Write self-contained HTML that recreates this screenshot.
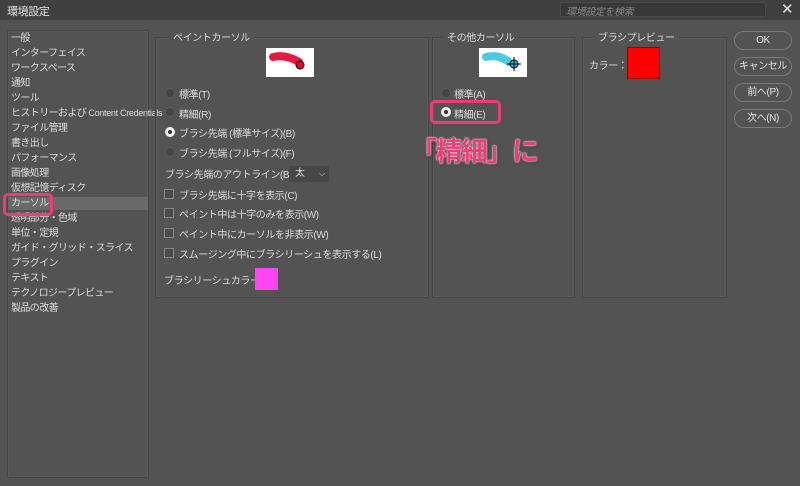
<!DOCTYPE html>
<html><head><meta charset="utf-8"><style>
*{margin:0;padding:0;box-sizing:border-box}
body{width:800px;height:486px;background:#535353;font-family:"Liberation Sans","Noto Sans CJK JP",sans-serif;font-size:10px;letter-spacing:-0.4px;color:#dcdcdc;position:relative;overflow:hidden}
.a{position:absolute;white-space:nowrap}
.title{left:0;top:0;width:800px;height:20px;background:#404040}
.panel{position:absolute;border:1px solid #464646;box-shadow:inset 0 0 0 1px #5a5a5a}
.lbl{position:absolute;background:#535353;padding:0 4px;color:#dcdcdc}
.radio{position:absolute;width:10px;height:10px;border-radius:50%;background:#444;border:1px solid #5c5c5c}
.radio.on{background:#333;border:3px solid #eee}
.cb{position:absolute;width:10px;height:10px;border:1px solid #8a8a8a;background:#4a4a4a}
.btn{position:absolute;left:734px;width:58px;height:19px;border:1px solid #7a7a7a;border-radius:10px;text-align:center;line-height:17px;color:#e4e4e4}
</style></head><body>
<div class="a title"></div>
<div class="a" style="left:7px;top:3px;color:#e6e6e6;font-size:11px">環境設定</div>
<div class="a" style="left:560px;top:2px;width:206px;height:15px;background:#383838;border:1px solid #4a4a4a"></div>
<div class="a" style="left:566px;top:3px;color:#8a8a8a;font-size:10px;font-style:italic">環境設定を検索</div>
<div class="a" style="left:781px;top:0px;font-size:15px;color:#e6e6e6">✕</div>

<div class="panel" style="left:7px;top:30px;width:142px;height:448px"></div>
<div class="a" style="left:8px;top:197px;width:140px;height:13px;background:#6a6a6a"></div>
<div class="a" style="left:11px;top:31px;line-height:15px;font-size:10px;letter-spacing:-0.6px">一般<br>インターフェイス<br>ワークスペース<br>通知<br>ツール<br>ヒストリーおよび <span style="font-size:9px;letter-spacing:-0.3px">Content Credentials</span><br>ファイル管理<br>書き出し<br>パフォーマンス<br>画像処理<br>仮想記憶ディスク<br>カーソル<br>透明部分・色域<br>単位・定規<br>ガイド・グリッド・スライス<br>プラグイン<br>テキスト<br>テクノロジープレビュー<br>製品の改善</div>
<div class="a" style="left:3px;top:193px;width:50px;height:23px;border:3px solid #ee3c79;border-radius:5px"></div>

<div class="panel" style="left:155px;top:37px;width:274px;height:261px"></div>
<div class="lbl" style="left:169px;top:29px">ペイントカーソル</div>
<svg class="a" style="left:266px;top:48px" width="48" height="29"><rect width="48" height="29" fill="#fff"/><path d="M7 9 Q20 6 33 14" stroke="#e5002a" stroke-width="8" stroke-linecap="round" fill="none" opacity=".9"/><circle cx="34" cy="17" r="4" fill="#e5002a" stroke="#000" stroke-width="1"/></svg>
<div class="radio" style="left:165px;top:88px"></div><div class="a" style="left:179px;top:86px">標準(T)</div>
<div class="radio" style="left:165px;top:107px"></div><div class="a" style="left:179px;top:106px">精細(R)</div>
<div class="radio on" style="left:165px;top:127px"></div><div class="a" style="left:179px;top:125px">ブラシ先端 (標準サイズ)(B)</div>
<div class="radio" style="left:165px;top:147px"></div><div class="a" style="left:179px;top:145px">ブラシ先端 (フルサイズ)(F)</div>
<div class="a" style="left:165px;top:166px">ブラシ先端のアウトライン(B)：</div>
<div class="a" style="left:289px;top:166px;width:40px;height:16px;background:#474747;padding-left:6px;line-height:15px">太 <span style="position:absolute;left:30px;font-size:8px">⌵</span></div>
<div class="cb" style="left:164px;top:189px"></div><div class="a" style="left:179px;top:187px">ブラシ先端に十字を表示(C)</div>
<div class="cb" style="left:164px;top:208px"></div><div class="a" style="left:179px;top:206px">ペイント中は十字のみを表示(W)</div>
<div class="cb" style="left:164px;top:228px"></div><div class="a" style="left:179px;top:226px">ペイント中にカーソルを非表示(W)</div>
<div class="cb" style="left:164px;top:248px"></div><div class="a" style="left:179px;top:246px">スムージング中にブラシリーシュを表示する(L)</div>
<div class="a" style="left:164px;top:272px">ブラシリーシュカラー：</div>
<div class="a" style="left:255px;top:268px;width:23px;height:22px;background:#ff44f6"></div>

<div class="panel" style="left:432px;top:37px;width:143px;height:261px"></div>
<div class="lbl" style="left:443px;top:29px">その他カーソル</div>
<svg class="a" style="left:479px;top:48px" width="48" height="29"><rect width="48" height="29" fill="#fff"/><path d="M7 9 Q20 6 30 14" stroke="#2bbfe0" stroke-width="8" stroke-linecap="round" fill="none" opacity=".85"/><circle cx="35" cy="16" r="4" fill="#2bbfe0" stroke="#000"/><path d="M35 9v14M28 16h14" stroke="#000"/></svg>
<div class="radio" style="left:441px;top:88px"></div><div class="a" style="left:454px;top:86px">標準(A)</div>
<div class="radio on" style="left:441px;top:107px"></div><div class="a" style="left:454px;top:106px">精細(E)</div>
<div class="a" style="left:430px;top:100px;width:71px;height:24px;border:3px solid #ee3c79;border-radius:5px"></div>
<div class="a" style="left:410px;top:130px;font-size:27px;letter-spacing:-1.5px;font-weight:bold;color:#ee3c79;text-shadow:0 0 2px #fff,0 0 1px #fff,1px 1px 3px rgba(0,0,0,.5)">「精細」に</div>

<div class="panel" style="left:582px;top:37px;width:145px;height:261px"></div>
<div class="lbl" style="left:594px;top:29px">ブラシプレビュー</div>
<div class="a" style="left:589px;top:57px">カラー：</div>
<div class="a" style="left:627px;top:47px;width:33px;height:32px;background:#f00;border:1px solid #900"></div>

<div class="btn" style="top:31px">OK</div>
<div class="btn" style="top:57px">キャンセル</div>
<div class="btn" style="top:83px">前へ(P)</div>
<div class="btn" style="top:109px">次へ(N)</div>
</body></html>
